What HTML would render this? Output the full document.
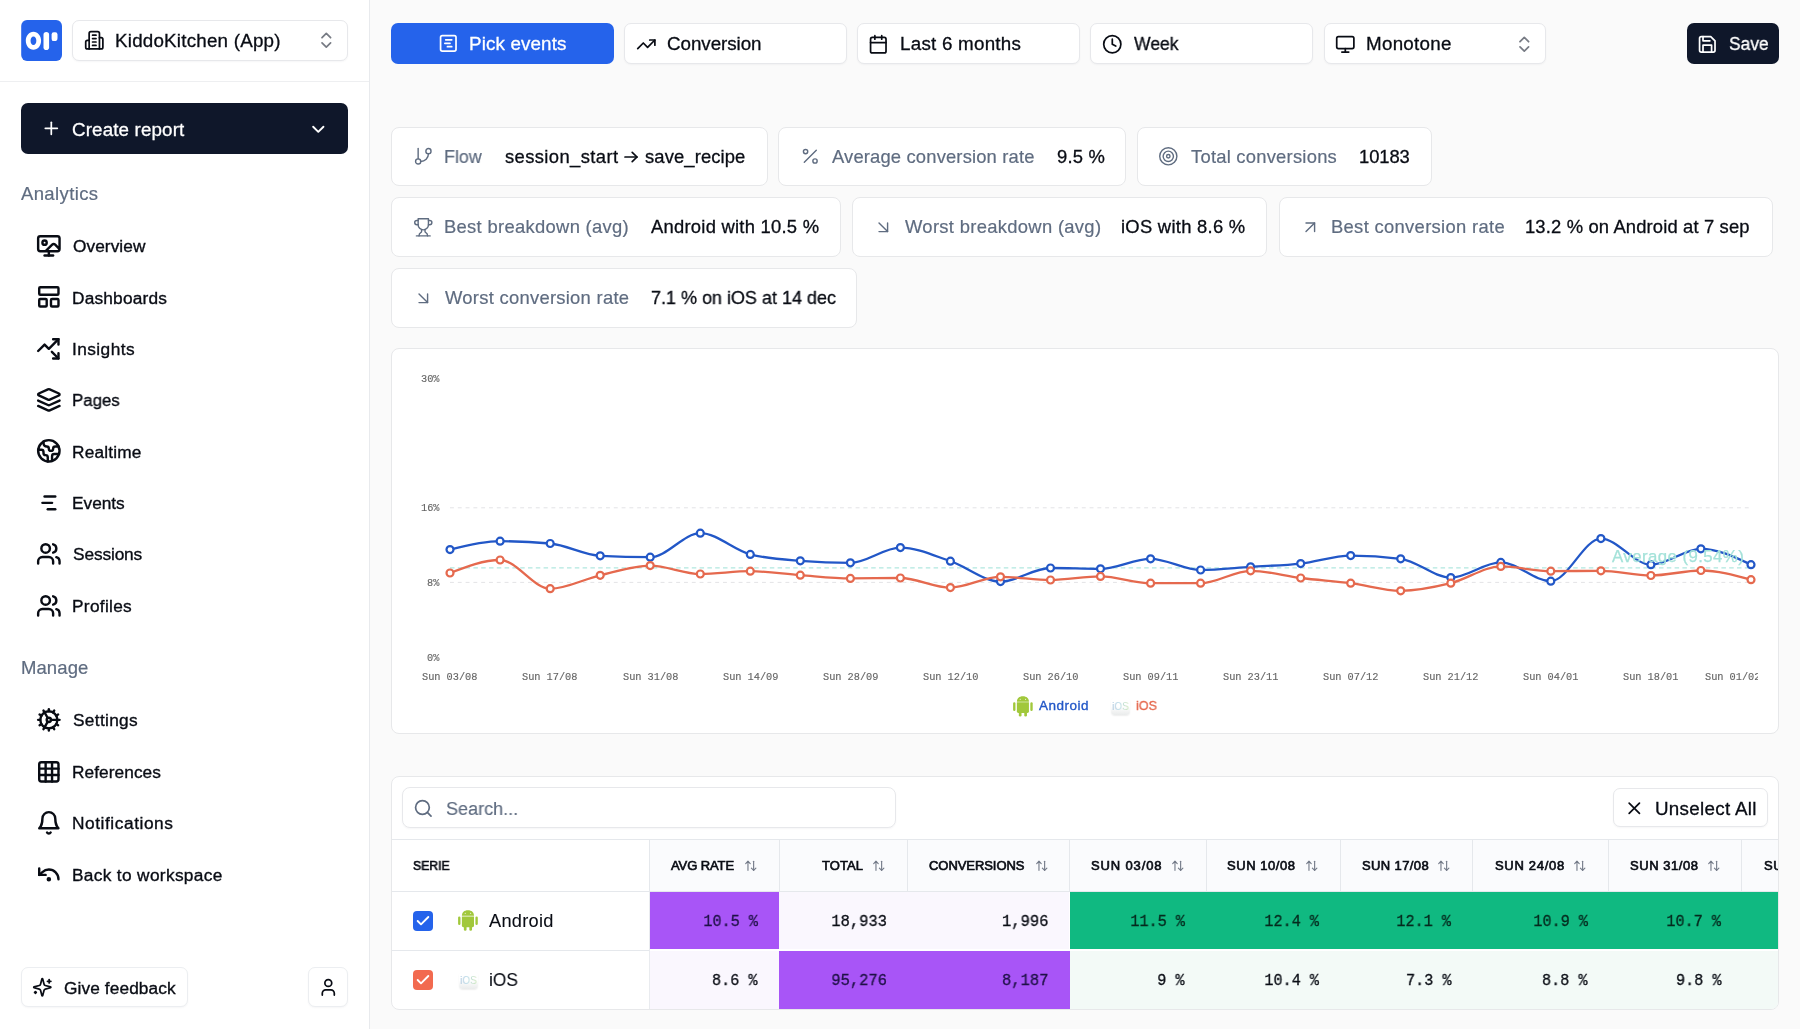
<!DOCTYPE html>
<html><head><meta charset="utf-8"><title>Conversion report</title>
<style>
*{box-sizing:border-box;margin:0;padding:0}
html,body{width:1800px;height:1029px;overflow:hidden;background:#fafafa}
body{font-family:"Liberation Sans",sans-serif;color:#090c14;position:relative}
#app{position:absolute;left:0;top:0;width:1800px;height:1029px;overflow:hidden}
.b{position:absolute}
.ic{position:absolute;display:block;overflow:visible}
.t{position:absolute;white-space:pre;will-change:transform;font-family:"Liberation Sans",sans-serif}
.m{font-family:"Liberation Mono",monospace}
.card{background:#fff;border:1px solid #e7e8ea;border-radius:8px}
.btn{background:#fff;border:1px solid #e7e8eb;border-radius:7px;box-shadow:0 1px 2px rgba(15,23,42,.04)}
</style></head>
<body>
<div class="b" style="left:0px;top:0px;width:369.5px;height:1029px;background:#fff;border-right:1px solid #e8eaed"></div>
<div class="b" style="left:0px;top:81px;width:369px;height:1px;background:#eeeff1"></div>
<svg class="ic" style="left:20.5px;top:20px" width="41" height="41" viewBox="20.5 20 41 41"><rect x="20.7" y="20.1" width="40.800" height="40.8" rx="5.800" fill="#2563eb"/><path fill="#fff" fill-rule="evenodd" d="M32.95 31.7c4.300 0 7.650 4 7.650 9s-3.350 9-7.650 9-7.650-4-7.650-9 3.350-9 7.650-9Zm0 4.700c-1.700 0-2.900 1.900-2.900 4.300s1.200 4.300 2.900 4.300 2.900-1.900 2.900-4.300-1.200-4.300-2.900-4.300Z"/><rect x="43" y="32" width="5.600" height="18" rx="2.800" fill="#fff"/><path fill="#fff" d="M53.300 32.200h1.500a2.200 2.200 0 0 1 2.200 2.200v3.500a3.200 3.200 0 0 1-3.200 3.200h-.500a2.200 2.200 0 0 1-2.200-2.200v-4.500a2.200 2.200 0 0 1 2.200-2.200Z"/></svg>
<div class="b btn" style="left:72px;top:20.1px;width:276.2px;height:41.2px;"></div>
<svg class="ic" style="left:83.50px;top:30.40px" width="20.6" height="20.6" viewBox="0 0 24 24" fill="none" stroke="#090c14" stroke-width="2" stroke-linecap="round" stroke-linejoin="round"><path d="M6 22V4a2 2 0 0 1 2-2h8a2 2 0 0 1 2 2v18Z"/><path d="M6 12H4a2 2 0 0 0-2 2v6a2 2 0 0 0 2 2h2"/><path d="M18 9h2a2 2 0 0 1 2 2v9a2 2 0 0 1-2 2h-2"/><path d="M10 6h4"/><path d="M10 10h4"/><path d="M10 14h4"/><path d="M10 18h4"/></svg>
<div class="t" style="left:114.60px;top:32px;font-size:18.8px;line-height:18.8px;color:#090c14;letter-spacing:0.214px;-webkit-text-stroke:0.3px #090c14;">KiddoKitchen (App)</div>
<svg class="ic" style="left:316.30px;top:30.30px" width="20.6" height="20.6" viewBox="0 0 24 24" fill="none" stroke="#777b84" stroke-width="2" stroke-linecap="round" stroke-linejoin="round"><path d="m7 15 5 5 5-5"/><path d="m7 9 5-5 5 5"/></svg>
<div class="b" style="left:20.6px;top:103.2px;width:327.4px;height:50.5px;background:#0f172a;border-radius:7px"></div>
<svg class="ic" style="left:41.30px;top:118.40px" width="20.6" height="20.6" viewBox="0 0 24 24" fill="none" stroke="#fff" stroke-width="2" stroke-linecap="round" stroke-linejoin="round"><path d="M5 12h14"/><path d="M12 5v14"/></svg>
<div class="t" style="left:72.40px;top:121px;font-size:18.8px;line-height:18.8px;color:#fff;letter-spacing:0.139px;-webkit-text-stroke:0.3px #fff;">Create report</div>
<svg class="ic" style="left:307.60px;top:119.00px" width="20.6" height="20.6" viewBox="0 0 24 24" fill="none" stroke="#fff" stroke-width="2.2" stroke-linecap="round" stroke-linejoin="round"><path d="m6 9 6 6 6-6"/></svg>
<div class="t" style="left:21.25px;top:185px;font-size:18.5px;line-height:18.5px;color:#5f6c80;letter-spacing:0.372px;-webkit-text-stroke:0.2px #5f6c80;">Analytics</div>
<svg class="ic" style="left:35.95px;top:232.85px" width="25.7" height="25.7" viewBox="0 0 24 24" fill="none" stroke="#090c14" stroke-width="2.25" stroke-linecap="round" stroke-linejoin="round"><circle cx="8" cy="9" r="2"/><path d="m9 17 6.1-6.1a2 2 0 0 1 2.81.01L22 15V5a2 2 0 0 0-2-2H4a2 2 0 0 0-2 2v10a2 2 0 0 0 2 2h16a2 2 0 0 0 2-2"/><path d="M8 21h8"/><path d="M12 17v4"/></svg>
<div class="t" style="left:72.80px;top:238px;font-size:17.3px;line-height:17.3px;color:#090c14;letter-spacing:0.052px;-webkit-text-stroke:0.35px #090c14;">Overview</div>
<svg class="ic" style="left:35.95px;top:284.25px" width="25.7" height="25.7" viewBox="0 0 24 24" fill="none" stroke="#090c14" stroke-width="2.25" stroke-linecap="round" stroke-linejoin="round"><rect width="18" height="7" x="3" y="3" rx="1"/><rect width="7" height="7" x="3" y="14" rx="1"/><rect width="7" height="7" x="14" y="14" rx="1"/></svg>
<div class="t" style="left:71.80px;top:290px;font-size:17.3px;line-height:17.3px;color:#090c14;letter-spacing:0.195px;-webkit-text-stroke:0.35px #090c14;">Dashboards</div>
<svg class="ic" style="left:35.95px;top:335.65px" width="25.7" height="25.7" viewBox="0 0 24 24" fill="none" stroke="#090c14" stroke-width="2.25" stroke-linecap="round" stroke-linejoin="round"><path d="M14.828 14.828 21 21"/><path d="M21 16v5h-5"/><path d="m21 3-9 9-4-4-6 6"/><path d="M21 8V3h-5"/></svg>
<div class="t" style="left:71.80px;top:341px;font-size:17.3px;line-height:17.3px;color:#090c14;letter-spacing:0.426px;-webkit-text-stroke:0.35px #090c14;">Insights</div>
<svg class="ic" style="left:35.95px;top:387.05px" width="25.7" height="25.7" viewBox="0 0 24 24" fill="none" stroke="#090c14" stroke-width="2.25" stroke-linecap="round" stroke-linejoin="round"><path d="m12.83 2.18a2 2 0 0 0-1.66 0L2.6 6.08a1 1 0 0 0 0 1.83l8.58 3.91a2 2 0 0 0 1.66 0l8.58-3.9a1 1 0 0 0 0-1.830Z"/><path d="m22 17.650-9.170 4.160a2 2 0 0 1-1.660 0L2 17.650"/><path d="m22 12.650-9.170 4.160a2 2 0 0 1-1.660 0L2 12.650"/></svg>
<div class="t" style="left:71.80px;top:392px;font-size:17.3px;line-height:17.3px;color:#090c14;-webkit-text-stroke:0.35px #090c14;transform:scaleX(0.9740);transform-origin:1.00px 50%;">Pages</div>
<svg class="ic" style="left:35.95px;top:438.45px" width="25.7" height="25.7" viewBox="0 0 24 24" fill="none" stroke="#090c14" stroke-width="2.25" stroke-linecap="round" stroke-linejoin="round"><path d="M21.540 15H17a2 2 0 0 0-2 2v4.540"/><path d="M7 3.340V5a3 3 0 0 0 3 3a2 2 0 0 1 2 2c0 1.100.900 2 2 2a2 2 0 0 0 2-2c0-1.100.900-2 2-2h3.170"/><path d="M11 21.950V18a2 2 0 0 0-2-2a2 2 0 0 1-2-2v-1a2 2 0 0 0-2-2H2.050"/><circle cx="12" cy="12" r="10"/></svg>
<div class="t" style="left:71.80px;top:444px;font-size:17.3px;line-height:17.3px;color:#090c14;letter-spacing:0.160px;-webkit-text-stroke:0.35px #090c14;">Realtime</div>
<svg class="ic" style="left:35.95px;top:489.85px" width="25.7" height="25.7" viewBox="0 0 24 24" fill="none" stroke="#090c14" stroke-width="2.25" stroke-linecap="round" stroke-linejoin="round"><path d="M8 6h10"/><path d="M6 12h9"/><path d="M11 18h7"/></svg>
<div class="t" style="left:71.80px;top:495px;font-size:17.3px;line-height:17.3px;color:#090c14;letter-spacing:-0.018px;-webkit-text-stroke:0.35px #090c14;">Events</div>
<svg class="ic" style="left:35.95px;top:541.25px" width="25.7" height="25.7" viewBox="0 0 24 24" fill="none" stroke="#090c14" stroke-width="2.25" stroke-linecap="round" stroke-linejoin="round"><path d="M16 21v-2a4 4 0 0 0-4-4H6a4 4 0 0 0-4 4v2"/><circle cx="9" cy="7" r="4"/><path d="M22 21v-2a4 4 0 0 0-3-3.870"/><path d="M16 3.130a4 4 0 0 1 0 7.750"/></svg>
<div class="t" style="left:72.80px;top:546px;font-size:17.3px;line-height:17.3px;color:#090c14;letter-spacing:-0.126px;-webkit-text-stroke:0.35px #090c14;">Sessions</div>
<svg class="ic" style="left:35.95px;top:592.65px" width="25.7" height="25.7" viewBox="0 0 24 24" fill="none" stroke="#090c14" stroke-width="2.25" stroke-linecap="round" stroke-linejoin="round"><path d="M16 21v-2a4 4 0 0 0-4-4H6a4 4 0 0 0-4 4v2"/><circle cx="9" cy="7" r="4"/><path d="M22 21v-2a4 4 0 0 0-3-3.870"/><path d="M16 3.130a4 4 0 0 1 0 7.750"/></svg>
<div class="t" style="left:71.80px;top:598px;font-size:17.3px;line-height:17.3px;color:#090c14;letter-spacing:0.302px;-webkit-text-stroke:0.35px #090c14;">Profiles</div>
<div class="t" style="left:20.60px;top:659px;font-size:18.5px;line-height:18.5px;color:#5f6c80;letter-spacing:0.087px;-webkit-text-stroke:0.2px #5f6c80;">Manage</div>
<svg class="ic" style="left:35.95px;top:707.25px" width="25.7" height="25.7" viewBox="0 0 24 24" fill="none" stroke="#090c14" stroke-width="2.25" stroke-linecap="round" stroke-linejoin="round"><path d="M12 20a8 8 0 1 0 0-16 8 8 0 0 0 0 16Z"/><path d="M12 14a2 2 0 1 0 0-4 2 2 0 0 0 0 4Z"/><path d="M12 2v2"/><path d="M12 22v-2"/><path d="m17 20.660-1-1.730"/><path d="M11 10.270 7 3.340"/><path d="m20.660 17-1.730-1"/><path d="m3.340 7 1.730 1"/><path d="M14 12h8"/><path d="M2 12h2"/><path d="m20.660 7-1.730 1"/><path d="m3.340 17 1.730-1"/><path d="m17 3.340-1 1.730"/><path d="m11 13.730-4 6.930"/></svg>
<div class="t" style="left:72.80px;top:712px;font-size:17.3px;line-height:17.3px;color:#090c14;letter-spacing:0.314px;-webkit-text-stroke:0.35px #090c14;">Settings</div>
<svg class="ic" style="left:35.95px;top:758.65px" width="25.7" height="25.7" viewBox="0 0 24 24" fill="none" stroke="#090c14" stroke-width="2.25" stroke-linecap="round" stroke-linejoin="round"><rect width="18" height="18" x="3" y="3" rx="2"/><path d="M3 9h18"/><path d="M3 15h18"/><path d="M9 3v18"/><path d="M15 3v18"/></svg>
<div class="t" style="left:71.80px;top:764px;font-size:17.3px;line-height:17.3px;color:#090c14;letter-spacing:0.063px;-webkit-text-stroke:0.35px #090c14;">References</div>
<svg class="ic" style="left:35.95px;top:810.05px" width="25.7" height="25.7" viewBox="0 0 24 24" fill="none" stroke="#090c14" stroke-width="2.25" stroke-linecap="round" stroke-linejoin="round"><path d="M6 8a6 6 0 0 1 12 0c0 7 3 9 3 9H3s3-2 3-9"/><path d="M10.300 21a1.940 1.940 0 0 0 3.400 0"/></svg>
<div class="t" style="left:71.80px;top:815px;font-size:17.3px;line-height:17.3px;color:#090c14;letter-spacing:0.568px;-webkit-text-stroke:0.35px #090c14;">Notifications</div>
<svg class="ic" style="left:35.95px;top:861.45px" width="25.7" height="25.7" viewBox="0 0 24 24" fill="none" stroke="#090c14" stroke-width="2.25" stroke-linecap="round" stroke-linejoin="round"><circle cx="12" cy="17" r="1"/><path d="M3 7v6h6"/><path d="M21 17a9 9 0 0 0-9-9 9 9 0 0 0-6 2.300L3 13"/></svg>
<div class="t" style="left:71.80px;top:867px;font-size:17.3px;line-height:17.3px;color:#090c14;letter-spacing:0.330px;-webkit-text-stroke:0.35px #090c14;">Back to workspace</div>
<div class="b btn" style="left:21px;top:967.4px;width:166.6px;height:40px;border-color:#eceef1"></div>
<svg class="ic" style="left:32.00px;top:977.30px" width="20.6" height="20.6" viewBox="0 0 24 24" fill="none" stroke="#090c14" stroke-width="2" stroke-linecap="round" stroke-linejoin="round"><path d="M9.937 15.500A2 2 0 0 0 8.500 14.063l-6.135-1.582a.5.5 0 0 1 0-.962L8.500 9.936A2 2 0 0 0 9.937 8.500l1.582-6.135a.5.5 0 0 1 .963 0L14.063 8.500A2 2 0 0 0 15.500 9.937l6.135 1.581a.5.5 0 0 1 0 .964L15.500 14.063a2 2 0 0 0-1.437 1.437l-1.582 6.135a.5.5 0 0 1-.963 0z"/><path d="M20 3v4"/><path d="M22 5h-4"/><path d="M4 17v2"/><path d="M5 18H3"/></svg>
<div class="t" style="left:63.60px;top:980px;font-size:17.3px;line-height:17.3px;color:#090c14;letter-spacing:0.097px;-webkit-text-stroke:0.35px #090c14;">Give feedback</div>
<div class="b btn" style="left:308px;top:967.4px;width:39.6px;height:40px;border-color:#eceef1"></div>
<svg class="ic" style="left:317.50px;top:977.40px" width="20.6" height="20.6" viewBox="0 0 24 24" fill="none" stroke="#090c14" stroke-width="2" stroke-linecap="round" stroke-linejoin="round"><path d="M19 21v-2a4 4 0 0 0-4-4H9a4 4 0 0 0-4 4v2"/><circle cx="12" cy="7" r="4"/></svg>
<div class="b" style="left:391px;top:23.4px;width:222.6px;height:40.6px;background:#2563eb;border-radius:7px"></div>
<svg class="ic" style="left:438.40px;top:33.40px" width="20.6" height="20.6" viewBox="0 0 24 24" fill="none" stroke="#fff" stroke-width="2" stroke-linecap="round" stroke-linejoin="round"><rect width="18" height="18" x="3" y="3" rx="2"/><path d="M9 8h7"/><path d="M8 12h6"/><path d="M11 16h5"/></svg>
<div class="t" style="left:469.00px;top:35px;font-size:18.8px;line-height:18.8px;color:#fff;letter-spacing:0.136px;-webkit-text-stroke:0.3px #fff;">Pick events</div>
<div class="b btn" style="left:624.3px;top:23.3px;width:222.3px;height:40.7px;"></div>
<svg class="ic" style="left:636.00px;top:33.60px" width="20.6" height="20.6" viewBox="0 0 24 24" fill="none" stroke="#090c14" stroke-width="2" stroke-linecap="round" stroke-linejoin="round"><polyline points="22 7 13.5 15.5 8.5 10.5 2 17"/><polyline points="16 7 22 7 22 13"/></svg>
<div class="t" style="left:667.20px;top:35px;font-size:18.8px;line-height:18.8px;color:#090c14;letter-spacing:-0.050px;-webkit-text-stroke:0.3px #090c14;">Conversion</div>
<div class="b btn" style="left:856.8px;top:23.3px;width:222.9px;height:40.7px;"></div>
<svg class="ic" style="left:868.30px;top:33.60px" width="20.6" height="20.6" viewBox="0 0 24 24" fill="none" stroke="#090c14" stroke-width="2" stroke-linecap="round" stroke-linejoin="round"><rect width="18" height="18" x="3" y="4" rx="2" ry="2"/><line x1="16" x2="16" y1="2" y2="6"/><line x1="8" x2="8" y1="2" y2="6"/><line x1="3" x2="21" y1="10" y2="10"/></svg>
<div class="t" style="left:899.50px;top:35px;font-size:18.8px;line-height:18.8px;color:#090c14;letter-spacing:0.243px;-webkit-text-stroke:0.3px #090c14;">Last 6 months</div>
<div class="b btn" style="left:1090.2px;top:23.3px;width:222.8px;height:40.7px;"></div>
<svg class="ic" style="left:1101.70px;top:33.60px" width="20.6" height="20.6" viewBox="0 0 24 24" fill="none" stroke="#090c14" stroke-width="2" stroke-linecap="round" stroke-linejoin="round"><circle cx="12" cy="12" r="10"/><polyline points="12 6 12 12 16 14"/></svg>
<div class="t" style="left:1134.10px;top:35px;font-size:18.8px;line-height:18.8px;color:#090c14;-webkit-text-stroke:0.3px #090c14;transform:scaleX(0.9342);transform-origin:0.00px 50%;">Week</div>
<div class="b btn" style="left:1323.5px;top:23.3px;width:222.3px;height:40.7px;"></div>
<svg class="ic" style="left:1335.00px;top:33.60px" width="20.6" height="20.6" viewBox="0 0 24 24" fill="none" stroke="#090c14" stroke-width="2" stroke-linecap="round" stroke-linejoin="round"><rect width="20" height="14" x="2" y="3" rx="2"/><line x1="8" x2="16" y1="21" y2="21"/><line x1="12" x2="12" y1="17" y2="21"/></svg>
<div class="t" style="left:1365.70px;top:35px;font-size:18.8px;line-height:18.8px;color:#090c14;letter-spacing:0.273px;-webkit-text-stroke:0.3px #090c14;">Monotone</div>
<svg class="ic" style="left:1514.10px;top:33.70px" width="20.6" height="20.6" viewBox="0 0 24 24" fill="none" stroke="#777b84" stroke-width="2" stroke-linecap="round" stroke-linejoin="round"><path d="m7 15 5 5 5-5"/><path d="m7 9 5-5 5 5"/></svg>
<div class="b" style="left:1687.2px;top:23.3px;width:92.1px;height:40.7px;background:#0f172a;border-radius:7px"></div>
<svg class="ic" style="left:1697.10px;top:33.70px" width="20.6" height="20.6" viewBox="0 0 24 24" fill="none" stroke="#fff" stroke-width="2" stroke-linecap="round" stroke-linejoin="round"><path d="M19 21H5a2 2 0 0 1-2-2V5a2 2 0 0 1 2-2h11l5 5v11a2 2 0 0 1-2 2z"/><polyline points="17 21 17 13 7 13 7 21"/><polyline points="7 3 7 8 15 8"/></svg>
<div class="t" style="left:1729.00px;top:35px;font-size:18.8px;line-height:18.8px;color:#fff;-webkit-text-stroke:0.3px #fff;transform:scaleX(0.9277);transform-origin:0.00px 50%;">Save</div>
<div class="b card" style="left:391.0px;top:126.5px;width:376.6px;height:59.80000000000001px;"></div>
<svg class="ic" style="left:412.70px;top:146.30px" width="20.6" height="20.6" viewBox="0 0 24 24" fill="none" stroke="#5f6c80" stroke-width="1.65" stroke-linecap="round" stroke-linejoin="round"><line x1="6" x2="6" y1="3" y2="15"/><circle cx="18" cy="6" r="3"/><circle cx="6" cy="18" r="3"/><path d="M18 9a9 9 0 0 1-9 9"/></svg>
<div class="t" style="left:443.80px;top:148px;font-size:18.4px;line-height:18.4px;color:#5f6c80;-webkit-text-stroke:0.2px #5f6c80;transform:scaleX(0.9728);transform-origin:1.00px 50%;">Flow</div>
<div class="t" style="left:504.60px;top:148px;font-size:18.4px;line-height:18.4px;color:#090c14;letter-spacing:0.388px;-webkit-text-stroke:0.3px #090c14;">session_start</div>
<div class="t" style="left:644.90px;top:148px;font-size:18.4px;line-height:18.4px;color:#090c14;letter-spacing:0.116px;-webkit-text-stroke:0.3px #090c14;">save_recipe</div>
<svg class="ic" style="left:623.5px;top:150.5px" width="14" height="12" viewBox="0 0 14 12" fill="none" stroke="#090c14" stroke-width="1.700" stroke-linecap="round" stroke-linejoin="round"><path d="M1 6h12"/><path d="M8.200 1.300 13 6l-4.800 4.700"/></svg>
<div class="b card" style="left:777.8px;top:126.5px;width:348.60000000000014px;height:59.80000000000001px;"></div>
<svg class="ic" style="left:799.70px;top:146.30px" width="20.6" height="20.6" viewBox="0 0 24 24" fill="none" stroke="#5f6c80" stroke-width="1.65" stroke-linecap="round" stroke-linejoin="round"><line x1="19" x2="5" y1="5" y2="19"/><circle cx="6.5" cy="6.5" r="2.5"/><circle cx="17.5" cy="17.5" r="2.5"/></svg>
<div class="t" style="left:832.20px;top:148px;font-size:18.4px;line-height:18.4px;color:#5f6c80;letter-spacing:0.155px;-webkit-text-stroke:0.2px #5f6c80;">Average conversion rate</div>
<div class="t" style="left:1056.80px;top:148px;font-size:18.4px;line-height:18.4px;color:#090c14;letter-spacing:0.206px;-webkit-text-stroke:0.3px #090c14;">9.5 %</div>
<div class="b card" style="left:1136.7px;top:126.5px;width:294.89999999999986px;height:59.80000000000001px;"></div>
<svg class="ic" style="left:1158.20px;top:146.30px" width="20.6" height="20.6" viewBox="0 0 24 24" fill="none" stroke="#5f6c80" stroke-width="1.65" stroke-linecap="round" stroke-linejoin="round"><circle cx="12" cy="12" r="10"/><circle cx="12" cy="12" r="6"/><circle cx="12" cy="12" r="2"/></svg>
<div class="t" style="left:1191.10px;top:148px;font-size:18.4px;line-height:18.4px;color:#5f6c80;letter-spacing:0.232px;-webkit-text-stroke:0.2px #5f6c80;">Total conversions</div>
<div class="t" style="left:1358.70px;top:148px;font-size:18.4px;line-height:18.4px;color:#090c14;letter-spacing:-0.103px;-webkit-text-stroke:0.3px #090c14;">10183</div>
<div class="b card" style="left:391.0px;top:197.1px;width:449.70000000000005px;height:60.29999999999998px;"></div>
<svg class="ic" style="left:412.80px;top:217.15px" width="20.6" height="20.6" viewBox="0 0 24 24" fill="none" stroke="#5f6c80" stroke-width="1.65" stroke-linecap="round" stroke-linejoin="round"><path d="M6 9H4.500a2.500 2.500 0 0 1 0-5H6"/><path d="M18 9h1.500a2.500 2.500 0 0 0 0-5H18"/><path d="M4 22h16"/><path d="M10 14.660V17c0 .550-.470.980-.970 1.210C7.850 18.750 7 20.240 7 22"/><path d="M14 14.660V17c0 .550.470.980.970 1.210C16.150 18.750 17 20.240 17 22"/><path d="M18 2H6v7a6 6 0 0 0 12 0V2Z"/></svg>
<div class="t" style="left:443.90px;top:218px;font-size:18.4px;line-height:18.4px;color:#5f6c80;letter-spacing:0.307px;-webkit-text-stroke:0.2px #5f6c80;">Best breakdown (avg)</div>
<div class="t" style="left:650.60px;top:218px;font-size:18.4px;line-height:18.4px;color:#090c14;letter-spacing:0.249px;-webkit-text-stroke:0.3px #090c14;">Android with 10.5 %</div>
<div class="b card" style="left:851.8px;top:197.1px;width:415.29999999999995px;height:60.29999999999998px;"></div>
<svg class="ic" style="left:873.00px;top:217.15px" width="20.6" height="20.6" viewBox="0 0 24 24" fill="none" stroke="#5f6c80" stroke-width="1.65" stroke-linecap="round" stroke-linejoin="round"><path d="m7 7 10 10"/><path d="M17 7v10H7"/></svg>
<div class="t" style="left:905.10px;top:218px;font-size:18.4px;line-height:18.4px;color:#5f6c80;letter-spacing:0.313px;-webkit-text-stroke:0.2px #5f6c80;">Worst breakdown (avg)</div>
<div class="t" style="left:1121.30px;top:218px;font-size:18.4px;line-height:18.4px;color:#090c14;letter-spacing:0.273px;-webkit-text-stroke:0.3px #090c14;">iOS with 8.6 %</div>
<div class="b card" style="left:1278.9px;top:197.1px;width:494.0999999999999px;height:60.29999999999998px;"></div>
<svg class="ic" style="left:1299.70px;top:217.15px" width="20.6" height="20.6" viewBox="0 0 24 24" fill="none" stroke="#5f6c80" stroke-width="1.65" stroke-linecap="round" stroke-linejoin="round"><path d="M7 7h10v10"/><path d="M7 17 17 7"/></svg>
<div class="t" style="left:1330.80px;top:218px;font-size:18.4px;line-height:18.4px;color:#5f6c80;letter-spacing:0.315px;-webkit-text-stroke:0.2px #5f6c80;">Best conversion rate</div>
<div class="t" style="left:1525.20px;top:218px;font-size:18.4px;line-height:18.4px;color:#090c14;letter-spacing:0.147px;-webkit-text-stroke:0.3px #090c14;">13.2 % on Android at 7 sep</div>
<div class="b card" style="left:391.0px;top:267.8px;width:466.0px;height:59.89999999999998px;"></div>
<svg class="ic" style="left:412.80px;top:287.65px" width="20.6" height="20.6" viewBox="0 0 24 24" fill="none" stroke="#5f6c80" stroke-width="1.65" stroke-linecap="round" stroke-linejoin="round"><path d="m7 7 10 10"/><path d="M17 7v10H7"/></svg>
<div class="t" style="left:444.90px;top:289px;font-size:18.4px;line-height:18.4px;color:#5f6c80;letter-spacing:0.275px;-webkit-text-stroke:0.2px #5f6c80;">Worst conversion rate</div>
<div class="t" style="left:651.00px;top:289px;font-size:18.4px;line-height:18.4px;color:#090c14;-webkit-text-stroke:0.3px #090c14;transform:scaleX(0.9776);transform-origin:0.00px 50%;">7.1 % on iOS at 14 dec</div>
<div class="b card" style="left:391px;top:348.3px;width:1388.2px;height:385.6px;"></div>
<svg class="ic" style="left:0;top:0" width="1800" height="1029" viewBox="0 0 1800 1029"><line x1="450" x2="1751" y1="507.8" y2="507.8" stroke="#e3e3e6" stroke-width="1" stroke-dasharray="3.9 3.9"/><line x1="450" x2="1751" y1="582.4" y2="582.4" stroke="#e3e3e6" stroke-width="1" stroke-dasharray="3.9 3.9"/><line x1="450" x2="1751" y1="567.8" y2="567.8" stroke="#b1e7df" stroke-width="1.300" stroke-dasharray="4.5 3.3"/><path d="M450.0,549.6C466.7,545.4 483.4,541.2 500.1,541.2C516.8,541.2 533.5,542.0 550.2,543.5C566.9,545.0 583.5,554.9 600.2,555.8C616.9,556.7 633.5,557.2 650.2,557.2C666.9,557.2 683.6,533.2 700.3,533.2C717.0,533.2 733.6,550.1 750.3,554.4C767.0,558.7 783.6,559.5 800.3,560.8C817.0,562.1 833.7,562.8 850.4,562.8C867.1,562.8 883.7,547.6 900.4,547.6C917.1,547.6 933.7,555.5 950.4,561.2C967.1,566.9 983.8,581.6 1000.5,581.6C1017.2,581.6 1033.8,568.0 1050.5,568.0C1067.2,568.0 1083.8,568.8 1100.5,568.8C1117.2,568.8 1133.9,558.8 1150.6,558.8C1167.3,558.8 1183.9,570.0 1200.6,570.0C1217.3,570.0 1233.9,567.9 1250.6,566.8C1267.3,565.7 1284.0,565.5 1300.7,563.6C1317.4,561.7 1334.0,555.6 1350.7,555.6C1367.4,555.6 1384.0,556.7 1400.7,558.8C1417.4,560.9 1434.1,577.6 1450.8,577.6C1467.5,577.6 1484.1,562.4 1500.8,562.4C1517.5,562.4 1534.1,581.2 1550.8,581.2C1567.5,581.2 1584.2,538.6 1600.9,538.6C1617.6,538.6 1634.2,564.7 1650.9,564.7C1667.6,564.7 1684.2,548.8 1700.9,548.8C1717.6,548.8 1734.3,556.8 1751.0,564.7" fill="none" stroke="#2257c7" stroke-width="2.300" stroke-linecap="round" stroke-linejoin="round"/><g fill="#fff" stroke="#2257c7" stroke-width="2.200"><circle cx="450.0" cy="549.6" r="3.500"/><circle cx="500.1" cy="541.2" r="3.500"/><circle cx="550.2" cy="543.5" r="3.500"/><circle cx="600.2" cy="555.8" r="3.500"/><circle cx="650.2" cy="557.2" r="3.500"/><circle cx="700.3" cy="533.2" r="3.500"/><circle cx="750.3" cy="554.4" r="3.500"/><circle cx="800.3" cy="560.8" r="3.500"/><circle cx="850.4" cy="562.8" r="3.500"/><circle cx="900.4" cy="547.6" r="3.500"/><circle cx="950.4" cy="561.2" r="3.500"/><circle cx="1000.5" cy="581.6" r="3.500"/><circle cx="1050.5" cy="568.0" r="3.500"/><circle cx="1100.5" cy="568.8" r="3.500"/><circle cx="1150.6" cy="558.8" r="3.500"/><circle cx="1200.6" cy="570.0" r="3.500"/><circle cx="1250.6" cy="566.8" r="3.500"/><circle cx="1300.7" cy="563.6" r="3.500"/><circle cx="1350.7" cy="555.6" r="3.500"/><circle cx="1400.7" cy="558.8" r="3.500"/><circle cx="1450.8" cy="577.6" r="3.500"/><circle cx="1500.8" cy="562.4" r="3.500"/><circle cx="1550.8" cy="581.2" r="3.500"/><circle cx="1600.9" cy="538.6" r="3.500"/><circle cx="1650.9" cy="564.7" r="3.500"/><circle cx="1700.9" cy="548.8" r="3.500"/><circle cx="1751.0" cy="564.7" r="3.500"/></g><path d="M450.0,573.0C466.7,566.5 483.4,560.0 500.1,560.0C516.8,560.0 533.5,588.7 550.2,588.7C566.9,588.7 583.5,579.1 600.2,575.3C616.9,571.4 633.5,565.6 650.2,565.6C666.9,565.6 683.6,574.0 700.3,574.0C717.0,574.0 733.6,571.2 750.3,571.2C767.0,571.2 783.6,574.0 800.3,575.2C817.0,576.4 833.7,578.4 850.4,578.4C867.1,578.4 883.7,578.0 900.4,578.0C917.1,578.0 933.7,587.6 950.4,587.6C967.1,587.6 983.8,576.8 1000.5,576.8C1017.2,576.8 1033.8,580.0 1050.5,580.0C1067.2,580.0 1083.8,576.4 1100.5,576.4C1117.2,576.4 1133.9,583.2 1150.6,583.2C1167.3,583.2 1183.9,583.2 1200.6,583.2C1217.3,583.2 1233.9,570.8 1250.6,570.8C1267.3,570.8 1284.0,575.9 1300.7,578.0C1317.4,580.1 1334.0,581.1 1350.7,583.2C1367.4,585.3 1384.0,590.8 1400.7,590.8C1417.4,590.8 1434.1,587.3 1450.8,583.2C1467.5,579.1 1484.1,566.4 1500.8,566.4C1517.5,566.4 1534.1,571.2 1550.8,571.2C1567.5,571.2 1584.2,570.8 1600.9,570.8C1617.6,570.8 1634.2,575.5 1650.9,575.5C1667.6,575.5 1684.2,570.5 1700.9,570.5C1717.6,570.5 1734.3,575.1 1751.0,579.7" fill="none" stroke="#e5694e" stroke-width="2.300" stroke-linecap="round" stroke-linejoin="round"/><g fill="#fff" stroke="#e5694e" stroke-width="2.200"><circle cx="450.0" cy="573.0" r="3.500"/><circle cx="500.1" cy="560.0" r="3.500"/><circle cx="550.2" cy="588.7" r="3.500"/><circle cx="600.2" cy="575.3" r="3.500"/><circle cx="650.2" cy="565.6" r="3.500"/><circle cx="700.3" cy="574.0" r="3.500"/><circle cx="750.3" cy="571.2" r="3.500"/><circle cx="800.3" cy="575.2" r="3.500"/><circle cx="850.4" cy="578.4" r="3.500"/><circle cx="900.4" cy="578.0" r="3.500"/><circle cx="950.4" cy="587.6" r="3.500"/><circle cx="1000.5" cy="576.8" r="3.500"/><circle cx="1050.5" cy="580.0" r="3.500"/><circle cx="1100.5" cy="576.4" r="3.500"/><circle cx="1150.6" cy="583.2" r="3.500"/><circle cx="1200.6" cy="583.2" r="3.500"/><circle cx="1250.6" cy="570.8" r="3.500"/><circle cx="1300.7" cy="578.0" r="3.500"/><circle cx="1350.7" cy="583.2" r="3.500"/><circle cx="1400.7" cy="590.8" r="3.500"/><circle cx="1450.8" cy="583.2" r="3.500"/><circle cx="1500.8" cy="566.4" r="3.500"/><circle cx="1550.8" cy="571.2" r="3.500"/><circle cx="1600.9" cy="570.8" r="3.500"/><circle cx="1650.9" cy="575.5" r="3.500"/><circle cx="1700.9" cy="570.5" r="3.500"/><circle cx="1751.0" cy="579.7" r="3.500"/></g></svg>
<div class="t m" style="left:421.04px;top:374px;font-size:10.3px;line-height:10.3px;color:#636363;-webkit-text-stroke:0.12px #636363;">30%</div>
<div class="t m" style="left:421.04px;top:503px;font-size:10.3px;line-height:10.3px;color:#636363;-webkit-text-stroke:0.12px #636363;">16%</div>
<div class="t m" style="left:427.22px;top:578px;font-size:10.3px;line-height:10.3px;color:#636363;-webkit-text-stroke:0.12px #636363;">8%</div>
<div class="t m" style="left:427.22px;top:653px;font-size:10.3px;line-height:10.3px;color:#636363;-webkit-text-stroke:0.12px #636363;">0%</div>
<div class="t m" style="left:422.40px;top:672px;font-size:10.3px;line-height:10.3px;color:#636363;letter-spacing:-0.029px;-webkit-text-stroke:0.12px #636363;">Sun 03/08</div>
<div class="t m" style="left:522.48px;top:672px;font-size:10.3px;line-height:10.3px;color:#636363;letter-spacing:-0.029px;-webkit-text-stroke:0.12px #636363;">Sun 17/08</div>
<div class="t m" style="left:622.56px;top:672px;font-size:10.3px;line-height:10.3px;color:#636363;letter-spacing:-0.029px;-webkit-text-stroke:0.12px #636363;">Sun 31/08</div>
<div class="t m" style="left:722.64px;top:672px;font-size:10.3px;line-height:10.3px;color:#636363;letter-spacing:-0.029px;-webkit-text-stroke:0.12px #636363;">Sun 14/09</div>
<div class="t m" style="left:822.72px;top:672px;font-size:10.3px;line-height:10.3px;color:#636363;letter-spacing:-0.029px;-webkit-text-stroke:0.12px #636363;">Sun 28/09</div>
<div class="t m" style="left:922.80px;top:672px;font-size:10.3px;line-height:10.3px;color:#636363;letter-spacing:-0.029px;-webkit-text-stroke:0.12px #636363;">Sun 12/10</div>
<div class="t m" style="left:1022.88px;top:672px;font-size:10.3px;line-height:10.3px;color:#636363;letter-spacing:-0.029px;-webkit-text-stroke:0.12px #636363;">Sun 26/10</div>
<div class="t m" style="left:1122.96px;top:672px;font-size:10.3px;line-height:10.3px;color:#636363;letter-spacing:-0.029px;-webkit-text-stroke:0.12px #636363;">Sun 09/11</div>
<div class="t m" style="left:1223.04px;top:672px;font-size:10.3px;line-height:10.3px;color:#636363;letter-spacing:-0.029px;-webkit-text-stroke:0.12px #636363;">Sun 23/11</div>
<div class="t m" style="left:1323.12px;top:672px;font-size:10.3px;line-height:10.3px;color:#636363;letter-spacing:-0.029px;-webkit-text-stroke:0.12px #636363;">Sun 07/12</div>
<div class="t m" style="left:1423.20px;top:672px;font-size:10.3px;line-height:10.3px;color:#636363;letter-spacing:-0.029px;-webkit-text-stroke:0.12px #636363;">Sun 21/12</div>
<div class="t m" style="left:1523.28px;top:672px;font-size:10.3px;line-height:10.3px;color:#636363;letter-spacing:-0.029px;-webkit-text-stroke:0.12px #636363;">Sun 04/01</div>
<div class="t m" style="left:1623.36px;top:672px;font-size:10.3px;line-height:10.3px;color:#636363;letter-spacing:-0.029px;-webkit-text-stroke:0.12px #636363;">Sun 18/01</div>
<div class="b" style="left:1700px;top:665px;width:57.7px;height:24px;overflow:hidden">
<div class="t m" style="left:4.70px;top:7px;font-size:10.3px;line-height:10.3px;color:#636363;letter-spacing:-0.029px;-webkit-text-stroke:0.12px #636363;">Sun 01/02</div>
</div>
<div class="t" style="left:1612.00px;top:549px;font-size:16.8px;line-height:16.8px;color:#a4e2d9;letter-spacing:0.440px;-webkit-text-stroke:0.25px #a4e2d9;">Average (9.54%)</div>
<svg class="ic" style="left:1012.6px;top:695.6px" width="19.8" height="20.6" viewBox="0 0 20 21" preserveAspectRatio="none" fill="#a1c83b"><path d="M3.900 5.900C3.900 2.300 6.300.200 10 .200s6.100 2.100 6.100 5.700Z"/><path d="M3.900 6.500h12.200v9.300a1.500 1.500 0 0 1-1.500 1.500H5.400a1.500 1.500 0 0 1-1.500-1.500Z"/><rect x=".1" y="6.500" width="2.400" height="8.700" rx="1.200"/><rect x="17.500" y="6.500" width="2.400" height="8.700" rx="1.200"/><rect x="5.900" y="14" width="2.700" height="6.900" rx="1.250"/><rect x="11.400" y="14" width="2.700" height="6.900" rx="1.250"/><circle cx="7.300" cy="3.300" r=".55" fill="#fff"/><circle cx="12.700" cy="3.300" r=".55" fill="#fff"/></svg>
<div class="t" style="left:1039.00px;top:699px;font-size:13.5px;line-height:13.5px;color:#2257c7;letter-spacing:0.496px;-webkit-text-stroke:0.35px #2257c7;">Android</div>
<div class="b" style="left:1110.5px;top:698px;width:19px;height:17px;border-radius:4px;background:linear-gradient(#fff 50%,#e9ebeb);box-shadow:0 1px 1.5px rgba(0,0,0,.07)"></div>
<div class="t" style="left:1112.00px;top:701px;font-size:11px;line-height:11px;color:#a9cfe6;transform:scaleX(0.9167);transform-origin:0.00px 50%;background:linear-gradient(90deg,#a3bfd9,#b9dbe8 45%,#cde6b9);-webkit-background-clip:text;color:transparent;">iOS</div>
<div class="t" style="left:1136.00px;top:699px;font-size:13.5px;line-height:13.5px;color:#e5694e;-webkit-text-stroke:0.35px #e5694e;transform:scaleX(0.9333);transform-origin:0.00px 50%;">iOS</div>
<div class="b card" style="left:391px;top:775.5px;width:1388.2px;height:234.4px;overflow:hidden"></div>
<div class="b" style="left:392px;top:776.5px;width:1386.2px;height:232.4px;overflow:hidden;border-radius:7px"><div class="b" style="left:-392px;top:-776.5px;width:1800px;height:1029px">
<div class="b btn" style="left:402.2px;top:787.2px;width:493.6px;height:40.6px;border-radius:8px"></div>
<svg class="ic" style="left:413.10px;top:797.70px" width="20.6" height="20.6" viewBox="0 0 24 24" fill="none" stroke="#5f6c80" stroke-width="2" stroke-linecap="round" stroke-linejoin="round"><circle cx="11" cy="11" r="8"/><path d="m21 21-4.300-4.300"/></svg>
<div class="t" style="left:446.00px;top:800px;font-size:18.8px;line-height:18.8px;color:#5f6c80;-webkit-text-stroke:0.15px #5f6c80;transform:scaleX(0.9602);transform-origin:0.00px 50%;">Search...</div>
<div class="b btn" style="left:1613px;top:787.8px;width:154.6px;height:39.6px;"></div>
<svg class="ic" style="left:1623.90px;top:797.80px" width="20.6" height="20.6" viewBox="0 0 24 24" fill="none" stroke="#090c14" stroke-width="2" stroke-linecap="round" stroke-linejoin="round"><path d="M18 6 6 18"/><path d="m6 6 12 12"/></svg>
<div class="t" style="left:1654.60px;top:800px;font-size:18.8px;line-height:18.8px;color:#090c14;letter-spacing:0.301px;-webkit-text-stroke:0.3px #090c14;">Unselect All</div>
<div class="b" style="left:392px;top:839px;width:1387px;height:1px;background:#e5e8ec"></div>
<div class="b" style="left:650px;top:840px;width:1129px;height:51px;background:#fafbfd"></div>
<div class="b" style="left:392px;top:891px;width:1387px;height:1px;background:#e5e8ec"></div>
<div class="b" style="left:392px;top:950px;width:258px;height:1px;background:#e5e8ec"></div>
<div class="b" style="left:649.2px;top:840px;width:1px;height:170px;background:#e5e8ec"></div>
<div class="b" style="left:778.8px;top:840px;width:1px;height:51px;background:#e5e8ec"></div>
<div class="b" style="left:907.1px;top:840px;width:1px;height:51px;background:#e5e8ec"></div>
<div class="b" style="left:1069.0px;top:840px;width:1px;height:51px;background:#e5e8ec"></div>
<div class="b" style="left:1205.7px;top:840px;width:1px;height:51px;background:#e5e8ec"></div>
<div class="b" style="left:1339.8px;top:840px;width:1px;height:51px;background:#e5e8ec"></div>
<div class="b" style="left:1471.7px;top:840px;width:1px;height:51px;background:#e5e8ec"></div>
<div class="b" style="left:1608.0px;top:840px;width:1px;height:51px;background:#e5e8ec"></div>
<div class="b" style="left:1741.3px;top:840px;width:1px;height:51px;background:#e5e8ec"></div>
<div class="t" style="left:413.00px;top:859px;font-size:13px;line-height:13px;color:#090c14;-webkit-text-stroke:0.65px #090c14;transform:scaleX(0.9405);transform-origin:0.00px 50%;">SERIE</div>
<div class="t" style="left:671.20px;top:859px;font-size:13px;line-height:13px;color:#090c14;letter-spacing:-0.105px;-webkit-text-stroke:0.65px #090c14;">AVG RATE</div>
<svg class="ic" style="left:743.70px;top:858.90px" width="13.6" height="13.6" viewBox="0 0 24 24" fill="none" stroke="#747b89" stroke-width="2" stroke-linecap="round" stroke-linejoin="round"><path d="m21 16-4 4-4-4"/><path d="M17 20V4"/><path d="m3 8 4-4 4 4"/><path d="M7 4v16"/></svg>
<div class="t" style="left:822.00px;top:859px;font-size:13px;line-height:13px;color:#090c14;letter-spacing:0.084px;-webkit-text-stroke:0.65px #090c14;">TOTAL</div>
<svg class="ic" style="left:872.40px;top:858.90px" width="13.6" height="13.6" viewBox="0 0 24 24" fill="none" stroke="#747b89" stroke-width="2" stroke-linecap="round" stroke-linejoin="round"><path d="m21 16-4 4-4-4"/><path d="M17 20V4"/><path d="m3 8 4-4 4 4"/><path d="M7 4v16"/></svg>
<div class="t" style="left:929.30px;top:859px;font-size:13px;line-height:13px;color:#090c14;letter-spacing:-0.060px;-webkit-text-stroke:0.65px #090c14;">CONVERSIONS</div>
<svg class="ic" style="left:1034.60px;top:858.90px" width="13.6" height="13.6" viewBox="0 0 24 24" fill="none" stroke="#747b89" stroke-width="2" stroke-linecap="round" stroke-linejoin="round"><path d="m21 16-4 4-4-4"/><path d="M17 20V4"/><path d="m3 8 4-4 4 4"/><path d="M7 4v16"/></svg>
<div class="t" style="left:1091.20px;top:859px;font-size:13px;line-height:13px;color:#090c14;letter-spacing:0.867px;-webkit-text-stroke:0.65px #090c14;">SUN 03/08</div>
<svg class="ic" style="left:1170.70px;top:858.90px" width="13.6" height="13.6" viewBox="0 0 24 24" fill="none" stroke="#747b89" stroke-width="2" stroke-linecap="round" stroke-linejoin="round"><path d="m21 16-4 4-4-4"/><path d="M17 20V4"/><path d="m3 8 4-4 4 4"/><path d="M7 4v16"/></svg>
<div class="t" style="left:1227.40px;top:859px;font-size:13px;line-height:13px;color:#090c14;letter-spacing:0.542px;-webkit-text-stroke:0.65px #090c14;">SUN 10/08</div>
<svg class="ic" style="left:1304.50px;top:858.90px" width="13.6" height="13.6" viewBox="0 0 24 24" fill="none" stroke="#747b89" stroke-width="2" stroke-linecap="round" stroke-linejoin="round"><path d="m21 16-4 4-4-4"/><path d="M17 20V4"/><path d="m3 8 4-4 4 4"/><path d="M7 4v16"/></svg>
<div class="t" style="left:1361.60px;top:859px;font-size:13px;line-height:13px;color:#090c14;letter-spacing:0.380px;-webkit-text-stroke:0.65px #090c14;">SUN 17/08</div>
<svg class="ic" style="left:1437.40px;top:858.90px" width="13.6" height="13.6" viewBox="0 0 24 24" fill="none" stroke="#747b89" stroke-width="2" stroke-linecap="round" stroke-linejoin="round"><path d="m21 16-4 4-4-4"/><path d="M17 20V4"/><path d="m3 8 4-4 4 4"/><path d="M7 4v16"/></svg>
<div class="t" style="left:1494.50px;top:859px;font-size:13px;line-height:13px;color:#090c14;letter-spacing:0.692px;-webkit-text-stroke:0.65px #090c14;">SUN 24/08</div>
<svg class="ic" style="left:1572.90px;top:858.90px" width="13.6" height="13.6" viewBox="0 0 24 24" fill="none" stroke="#747b89" stroke-width="2" stroke-linecap="round" stroke-linejoin="round"><path d="m21 16-4 4-4-4"/><path d="M17 20V4"/><path d="m3 8 4-4 4 4"/><path d="M7 4v16"/></svg>
<div class="t" style="left:1630.00px;top:859px;font-size:13px;line-height:13px;color:#090c14;letter-spacing:0.542px;-webkit-text-stroke:0.65px #090c14;">SUN 31/08</div>
<svg class="ic" style="left:1706.70px;top:858.90px" width="13.6" height="13.6" viewBox="0 0 24 24" fill="none" stroke="#747b89" stroke-width="2" stroke-linecap="round" stroke-linejoin="round"><path d="m21 16-4 4-4-4"/><path d="M17 20V4"/><path d="m3 8 4-4 4 4"/><path d="M7 4v16"/></svg>
<div class="t" style="left:1764.10px;top:859px;font-size:13px;line-height:13px;color:#090c14;letter-spacing:0.567px;-webkit-text-stroke:0.65px #090c14;">SUN 07/09</div>
<div class="b" style="left:650px;top:892px;width:129.3px;height:57.4px;background:#a855f7"></div>
<div class="b" style="left:779.3px;top:892px;width:290.2px;height:57.4px;background:#faf7fe"></div>
<div class="b" style="left:1070px;top:892px;width:710px;height:57.4px;background:#10b981"></div>
<div class="b" style="left:650px;top:950.8px;width:129.3px;height:58.7px;background:#faf7fe"></div>
<div class="b" style="left:779.3px;top:950.8px;width:290.5px;height:58.7px;background:#a855f7"></div>
<div class="b" style="left:1070px;top:950.8px;width:710px;height:58.7px;background:#f3faf7"></div>
<div class="b" style="left:649.2px;top:892px;width:1px;height:118px;background:#e9ebef"></div>
<div class="t m" style="left:700.70px;top:915px;font-size:15.8px;line-height:15.8px;color:#1f1147;-webkit-text-stroke:0.3px #1f1147;transform:scaleX(0.9596);transform-origin:57.40px 50%;">10.5 %</div>
<div class="t m" style="left:830.20px;top:915px;font-size:15.8px;line-height:15.8px;color:#090c14;-webkit-text-stroke:0.3px #090c14;transform:scaleX(0.9769);transform-origin:56.40px 50%;">18,933</div>
<div class="t m" style="left:1001.48px;top:915px;font-size:15.8px;line-height:15.8px;color:#090c14;-webkit-text-stroke:0.3px #090c14;transform:scaleX(0.9800);transform-origin:46.92px 50%;">1,996</div>
<div class="t m" style="left:710.18px;top:974px;font-size:15.8px;line-height:15.8px;color:#090c14;-webkit-text-stroke:0.3px #090c14;transform:scaleX(0.9591);transform-origin:47.92px 50%;">8.6 %</div>
<div class="t m" style="left:830.20px;top:974px;font-size:15.8px;line-height:15.8px;color:#1f1147;-webkit-text-stroke:0.3px #1f1147;transform:scaleX(0.9769);transform-origin:56.40px 50%;">95,276</div>
<div class="t m" style="left:1001.48px;top:974px;font-size:15.8px;line-height:15.8px;color:#1f1147;-webkit-text-stroke:0.3px #1f1147;transform:scaleX(0.9800);transform-origin:46.92px 50%;">8,187</div>
<div class="t m" style="left:1127.80px;top:915px;font-size:15.8px;line-height:15.8px;color:#06281d;-webkit-text-stroke:0.3px #06281d;transform:scaleX(0.9596);transform-origin:57.40px 50%;">11.5 %</div>
<div class="t m" style="left:1156.24px;top:974px;font-size:15.8px;line-height:15.8px;color:#090c14;-webkit-text-stroke:0.3px #090c14;transform:scaleX(0.9571);transform-origin:28.96px 50%;">9 %</div>
<div class="t m" style="left:1261.50px;top:915px;font-size:15.8px;line-height:15.8px;color:#06281d;-webkit-text-stroke:0.3px #06281d;transform:scaleX(0.9596);transform-origin:57.40px 50%;">12.4 %</div>
<div class="t m" style="left:1261.50px;top:974px;font-size:15.8px;line-height:15.8px;color:#090c14;-webkit-text-stroke:0.3px #090c14;transform:scaleX(0.9596);transform-origin:57.40px 50%;">10.4 %</div>
<div class="t m" style="left:1394.40px;top:915px;font-size:15.8px;line-height:15.8px;color:#06281d;-webkit-text-stroke:0.3px #06281d;transform:scaleX(0.9596);transform-origin:57.40px 50%;">12.1 %</div>
<div class="t m" style="left:1403.88px;top:974px;font-size:15.8px;line-height:15.8px;color:#090c14;-webkit-text-stroke:0.3px #090c14;transform:scaleX(0.9591);transform-origin:47.92px 50%;">7.3 %</div>
<div class="t m" style="left:1530.50px;top:915px;font-size:15.8px;line-height:15.8px;color:#06281d;-webkit-text-stroke:0.3px #06281d;transform:scaleX(0.9596);transform-origin:57.40px 50%;">10.9 %</div>
<div class="t m" style="left:1539.98px;top:974px;font-size:15.8px;line-height:15.8px;color:#090c14;-webkit-text-stroke:0.3px #090c14;transform:scaleX(0.9591);transform-origin:47.92px 50%;">8.8 %</div>
<div class="t m" style="left:1664.30px;top:915px;font-size:15.8px;line-height:15.8px;color:#06281d;-webkit-text-stroke:0.3px #06281d;transform:scaleX(0.9596);transform-origin:57.40px 50%;">10.7 %</div>
<div class="t m" style="left:1673.78px;top:974px;font-size:15.8px;line-height:15.8px;color:#090c14;-webkit-text-stroke:0.3px #090c14;transform:scaleX(0.9591);transform-origin:47.92px 50%;">9.8 %</div>
<div class="b" style="left:413px;top:910.7px;width:20px;height:20.2px;border-radius:4px;background:#2563eb"></div>
<svg class="ic" style="left:415px;top:913.0px" width="16" height="16" viewBox="0 0 24 24" fill="none" stroke="#fff" stroke-width="2.800" stroke-linecap="round" stroke-linejoin="round"><path d="M20 6 9 17l-5-5"/></svg>
<div class="b" style="left:413px;top:969.8px;width:20px;height:20.2px;border-radius:4px;background:#f26a4f"></div>
<svg class="ic" style="left:415px;top:972.0999999999999px" width="16" height="16" viewBox="0 0 24 24" fill="none" stroke="#fff" stroke-width="2.800" stroke-linecap="round" stroke-linejoin="round"><path d="M20 6 9 17l-5-5"/></svg>
<svg class="ic" style="left:458px;top:910.2px" width="19.9" height="20.8" viewBox="0 0 20 21" preserveAspectRatio="none" fill="#a1c83b"><path d="M3.900 5.900C3.900 2.300 6.300.200 10 .200s6.100 2.100 6.100 5.700Z"/><path d="M3.900 6.500h12.200v9.300a1.500 1.500 0 0 1-1.500 1.500H5.400a1.500 1.500 0 0 1-1.500-1.500Z"/><rect x=".1" y="6.500" width="2.400" height="8.700" rx="1.200"/><rect x="17.500" y="6.500" width="2.400" height="8.700" rx="1.200"/><rect x="5.900" y="14" width="2.700" height="6.900" rx="1.250"/><rect x="11.400" y="14" width="2.700" height="6.900" rx="1.250"/><circle cx="7.300" cy="3.300" r=".55" fill="#fff"/><circle cx="12.700" cy="3.300" r=".55" fill="#fff"/></svg>
<div class="t" style="left:489.30px;top:912px;font-size:18.2px;line-height:18.2px;color:#090c14;letter-spacing:0.288px;-webkit-text-stroke:0.1px #090c14;">Android</div>
<div class="b" style="left:458.5px;top:971.5px;width:19.500px;height:17.5px;border-radius:4px;background:linear-gradient(#fff 50%,#e9ebeb);box-shadow:0 1px 1.5px rgba(0,0,0,.07)"></div>
<div class="t" style="left:460.00px;top:975px;font-size:11px;line-height:11px;color:#a9cfe6;transform:scaleX(0.9167);transform-origin:0.00px 50%;background:linear-gradient(90deg,#a3bfd9,#b9dbe8 45%,#cde6b9);-webkit-background-clip:text;color:transparent;">iOS</div>
<div class="t" style="left:488.50px;top:971px;font-size:18.2px;line-height:18.2px;color:#090c14;-webkit-text-stroke:0.1px #090c14;transform:scaleX(0.9490);transform-origin:1.00px 50%;">iOS</div>
</div></div>
</body></html>
